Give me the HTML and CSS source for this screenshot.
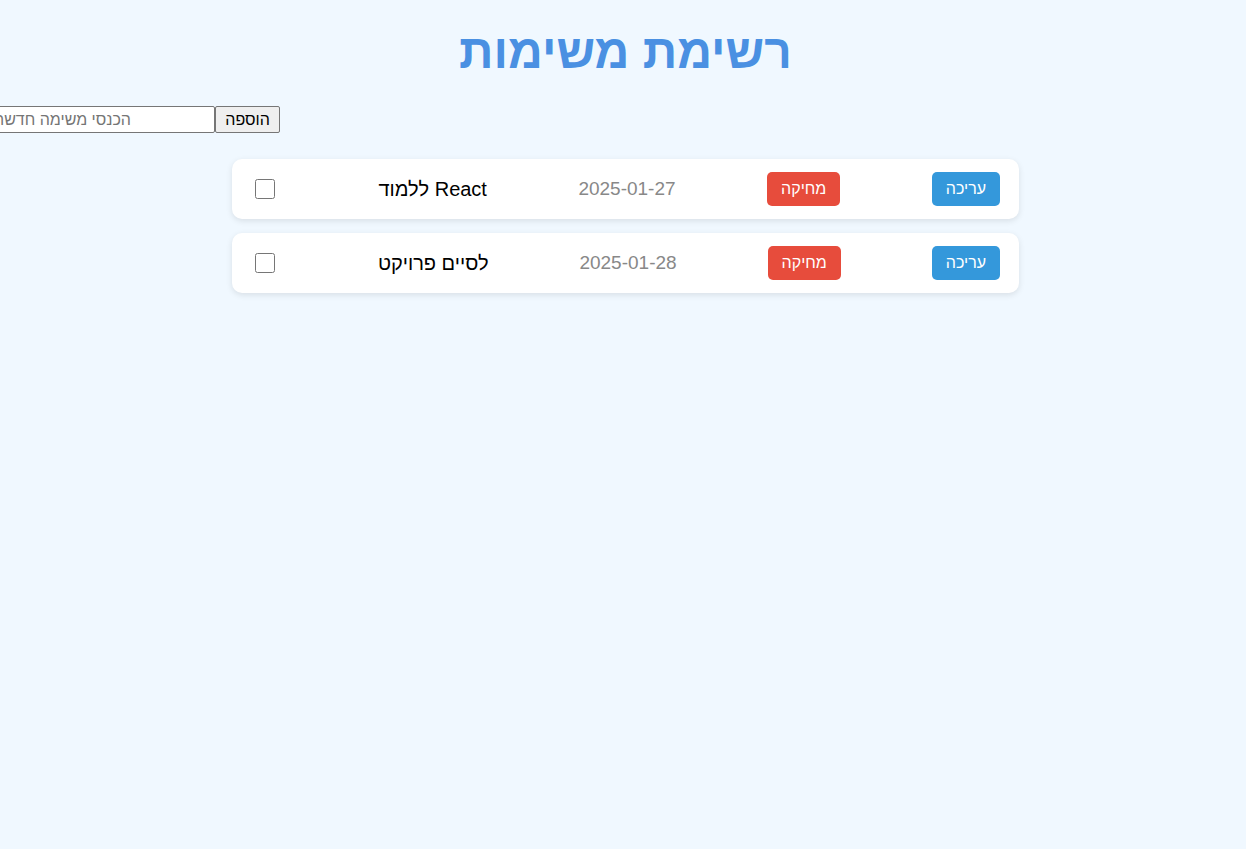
FILE: index.html
```html
<!DOCTYPE html>
<html lang="he" dir="rtl">
<head>
<meta charset="utf-8">
<title>רשימת משימות</title>
<link rel="stylesheet" href="styles.css">
</head>
<body>
<h1 class="title">רשימת משימות</h1>
<form class="add-form">
  <button type="button" class="add-btn">הוספה</button>
  <input type="text" class="add-input" placeholder="הכנסי משימה חדשה">
</form>
<ul class="task-list">
  <li class="task">
    <button type="button" class="btn btn-edit">עריכה</button>
    <button type="button" class="btn btn-delete">מחיקה</button>
    <span class="task-date">2025-01-27</span>
    <span class="task-text">ללמוד React</span>
    <input type="checkbox" class="task-check">
  </li>
  <li class="task">
    <button type="button" class="btn btn-edit">עריכה</button>
    <button type="button" class="btn btn-delete">מחיקה</button>
    <span class="task-date">2025-01-28</span>
    <span class="task-text">לסיים פרויקט</span>
    <input type="checkbox" class="task-check">
  </li>
</ul>
</body>
</html>
```
FILE: styles.css
```css
html, body {
  margin: 0;
  padding: 0;
}
body {
  background: #f0f8ff;
  font-family: "Liberation Sans", Arial, sans-serif;
  min-height: 100vh;
  overflow: hidden;
}
.title {
  margin: 24px 0 0;
  padding-left: 5px;
  text-align: center;
  color: #4a90e2;
  font-size: 48px;
  font-weight: bold;
  line-height: 55px;
}
.add-form {
  display: flex;
  width: 280px;
  margin: 27px auto 0 0;
}
.add-input {
  flex: 0 0 224px;
  width: 224px;
  height: 27px;
  box-sizing: border-box;
  direction: ltr;
  text-align: left;
  font-family: "Liberation Sans", Arial, sans-serif;
  font-size: 16px;
  border: 1px solid #767676;
  border-radius: 2px;
  padding: 1px 2px;
  background: #fff;
}
.add-input::placeholder {
  color: #757575;
}
.add-btn {
  flex: 0 0 65px;
  height: 27px;
  box-sizing: border-box;
  font-family: "Liberation Sans", Arial, sans-serif;
  font-size: 16px;
  color: #000;
  background: #efefef;
  border: 1px solid #767676;
  border-radius: 2px;
  padding: 1px 6px;
}
.task-list {
  list-style: none;
  margin: 26px 0 0;
  padding: 0;
  display: flex;
  flex-direction: column;
  gap: 14px;
  align-items: center;
}
.task {
  width: 787px;
  height: 60px;
  box-sizing: border-box;
  margin-left: 5px;
  background: #fff;
  border-radius: 10px;
  box-shadow: 0 2px 6px rgba(0, 0, 0, 0.1);
  padding: 0 19px 0 20px;
  display: flex;
  align-items: center;
  justify-content: space-between;
}
.btn {
  font-family: "Liberation Sans", Arial, sans-serif;
  font-size: 16px;
  color: #fff;
  border: none;
  border-radius: 5px;
  padding: 8px 14px;
  height: 34px;
}
.btn-edit {
  background: #3498db;
}
.btn-delete {
  background: #e74c3c;
}
.task-date {
  color: #888;
  font-size: 19px;
}
.task-text {
  font-size: 20px;
  color: #000;
  direction: ltr;
  unicode-bidi: isolate;
}
.task-check {
  width: 20px;
  height: 20px;
  margin: 0 12px 0 3px;
}
```
